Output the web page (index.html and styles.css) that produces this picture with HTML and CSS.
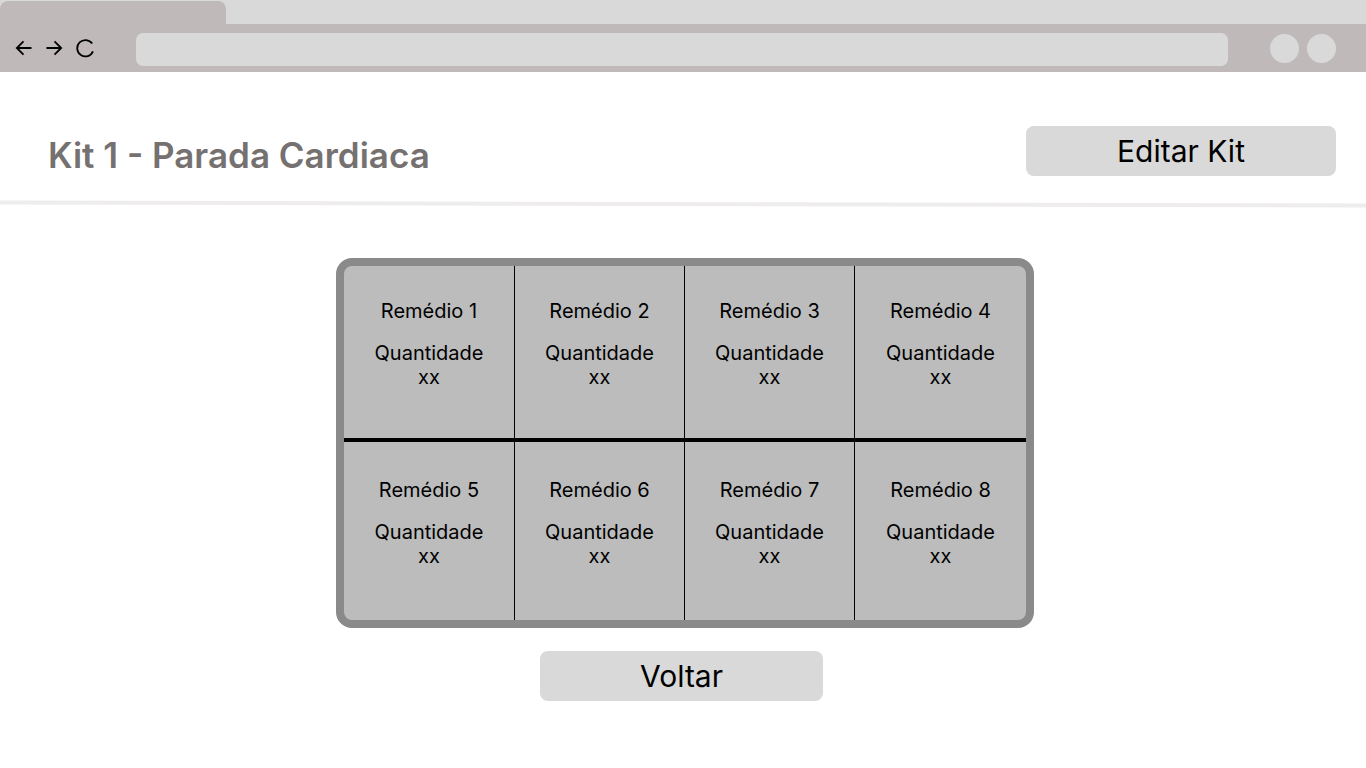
FILE: index.html
```html
<!DOCTYPE html>
<html lang="pt">
<head>
<meta charset="utf-8">
<title>Kit 1 - Parada Cardiaca</title>
<link rel="stylesheet" href="styles.css">
</head>
<body>
<div class="browser">
  <div class="tabstrip"><div class="tab"></div></div>
  <div class="toolbar">
    <div class="nav">
      <svg class="icon" width="18" height="18" viewBox="0 0 18 18"><path d="M16.5 9H1.5M8.5 2.3L1.8 9l6.7 6.7" fill="none" stroke="#000" stroke-width="1.8"/></svg>
      <svg class="icon" width="18" height="18" viewBox="0 0 18 18"><path d="M1.5 9h15M9.5 2.3L16.2 9l-6.7 6.7" fill="none" stroke="#000" stroke-width="1.8"/></svg>
      <svg class="icon" width="20" height="20" viewBox="0 0 20 20"><path d="M17.2 5.6A8.2 8.2 0 1 0 18 13.4" fill="none" stroke="#000" stroke-width="1.8"/></svg>
    </div>
    <div class="address"></div>
    <div class="dots"><span class="dot"></span><span class="dot"></span></div>
  </div>
</div>
<header class="header">
  <h1 class="title">Kit 1 - Parada Cardiaca</h1>
  <button class="btn btn-edit">Editar Kit</button>
</header>
<div class="separator"></div>
<main class="main">
  <div class="kit">
    <div class="row row-top">
      <div class="cell"><p class="name">Remédio 1</p><p class="qty">Quantidade<br>xx</p></div>
      <div class="cell"><p class="name">Remédio 2</p><p class="qty">Quantidade<br>xx</p></div>
      <div class="cell"><p class="name">Remédio 3</p><p class="qty">Quantidade<br>xx</p></div>
      <div class="cell"><p class="name">Remédio 4</p><p class="qty">Quantidade<br>xx</p></div>
    </div>
    <div class="row row-bottom">
      <div class="cell"><p class="name">Remédio 5</p><p class="qty">Quantidade<br>xx</p></div>
      <div class="cell"><p class="name">Remédio 6</p><p class="qty">Quantidade<br>xx</p></div>
      <div class="cell"><p class="name">Remédio 7</p><p class="qty">Quantidade<br>xx</p></div>
      <div class="cell"><p class="name">Remédio 8</p><p class="qty">Quantidade<br>xx</p></div>
    </div>
  </div>
  <button class="btn btn-back">Voltar</button>
</main>
</body>
</html>
```
FILE: styles.css
```css
* { box-sizing: border-box; }
html, body { margin: 0; padding: 0; background: #fff; }
body { font-family: Inter, "Noto Sans", sans-serif; color: #000; width: 1366px; height: 768px; overflow: hidden; }

.browser { background: #d9d9d9; }
.tabstrip { height: 24px; padding-top: 1px; }
.tab { width: 226px; height: 23px; background: #bfb9b9; border-radius: 8px 8px 0 0; }
.toolbar { height: 48px; background: #bfb9b9; display: flex; align-items: center; padding: 0 30px 0 15px; }
.nav { display: flex; align-items: center; gap: 12px; width: 121px; }
.icon { display: block; }
.address { flex: 1; align-self: flex-start; margin-top: 9px; height: 33px; background: #d9d9d9; border-radius: 7px; }
.dots { display: flex; gap: 8px; margin-left: 42px; }
.dot { width: 29px; height: 29px; border-radius: 50%; background: #d9d9d9; }

.header { height: 130px; display: flex; align-items: flex-start; justify-content: space-between; padding: 0 30px 0 48px; }
.title { margin: 0; margin-top: 63px; font-size: 35px; font-weight: 600; color: #767171; line-height: 40px; }
.separator { height: 4px; background: #eeecec; transform: rotate(0.12deg); }
.btn { font-family: Inter, "Noto Sans", sans-serif; font-size: 30px; color: #000; background: #d9d9d9; border: none; border-radius: 8px; padding: 0; line-height: 50px; height: 50px; }
.btn-edit { width: 310px; margin-top: 54px; }

.main { display: flex; flex-direction: column; align-items: center; padding-top: 52px; padding-right: 3px; }
.kit { width: 698px; margin-left: 7px; border: 8px solid #8a8a8a; border-radius: 16px; background: #bcbcbc; overflow: hidden; }
.row { display: grid; grid-template-columns: 170px 170px 170px 172px; }
.row-top { height: 176px; border-bottom: 4px solid #000; }
.row-bottom { height: 178px; }
.cell { display: flex; flex-direction: column; align-items: center; justify-content: center; padding-bottom: 16px; text-align: center; font-size: 20px; line-height: 24px; }
.cell + .cell { border-left: 1px solid #000; }
.name { margin: 0 0 18px; }
.qty { margin: 0; }

.btn-back { width: 283px; margin-top: 23px; }
```
